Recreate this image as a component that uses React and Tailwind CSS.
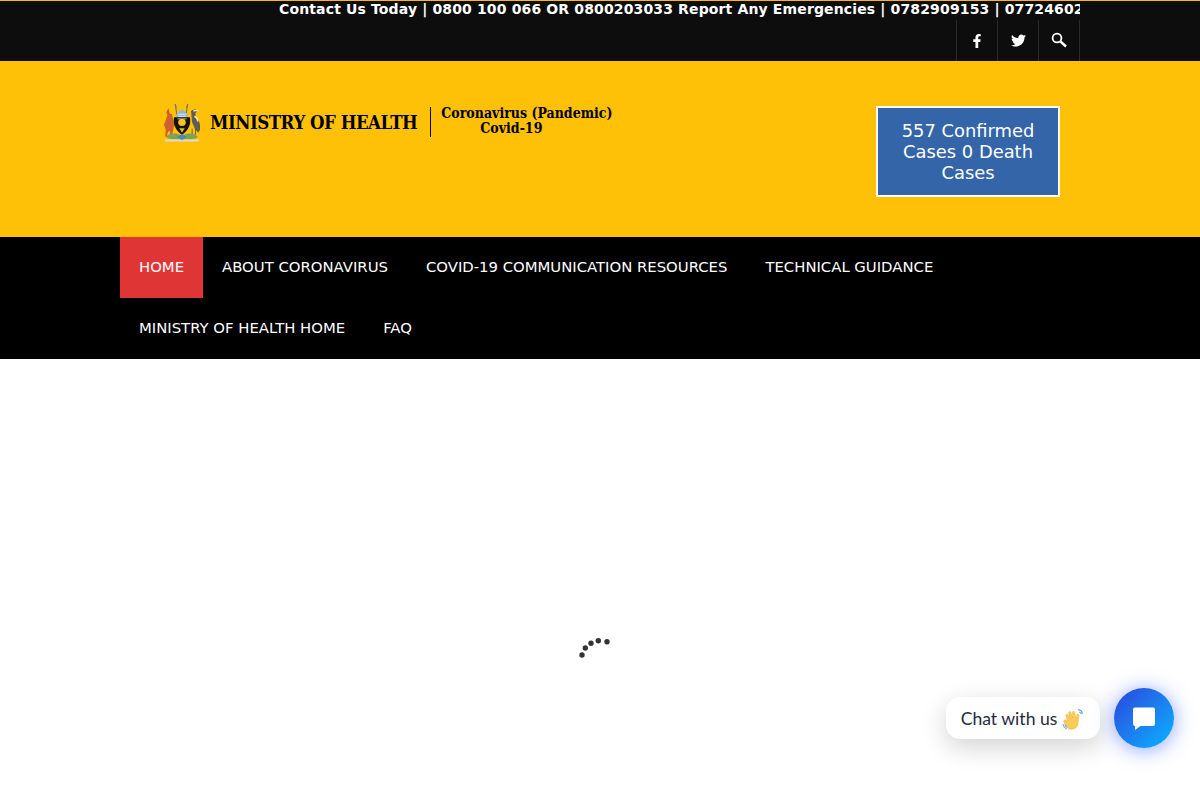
import { FaFacebookF, FaTwitter } from "react-icons/fa";

const menu = [
  ["HOME", true],
  ["ABOUT CORONAVIRUS"],
  ["COVID-19 COMMUNICATION RESOURCES"],
  ["TECHNICAL GUIDANCE"],
  ["MINISTRY OF HEALTH HOME"],
  ["FAQ"],
];

// Escudo de Uganda, dibujado a mano a tamaño pequeño
function Crest() {
  return (
    <svg width="36" height="38" viewBox="2 0 32 37" preserveAspectRatio="none" className="shrink-0">
      <path d="M12 0l1.500 11M23 0l-1.500 11" stroke="#77735c" strokeWidth="1" />
      <path d="M11.500 0l1 4 1-1zM23.500 0l-1 4-1-1z" fill="#77735c" />
      {/* kob */}
      <path d="M6 4l1 5 2 1 1 4 1 7-1 5-1 5H7l.5-5-2 1-1 5H3l.5-7L2 20l2-6 1-3-1-3z" fill="#d0612f" />
      {/* grulla */}
      <path d="M26 7c2-2.500 5-2 6 0l-2 1.500V13c3 2 4.500 6 4 12l-1.500 3-3-4-2.500-6z" fill="#5f5c50" />
      <path d="M28 6.500h4.500" stroke="#efe6c8" strokeWidth="1.400" />
      <path d="M29 12c2 1 3 3 3 5" stroke="#f3efe0" strokeWidth="1.400" fill="none" />
      <path d="M27 24v6M30 24v6" stroke="#55513f" strokeWidth=".8" />
      {/* escudo */}
      <path d="M18 5l5 5v3H13v-3z" fill="#8db5dc" />
      <path d="M14 10h8M14.500 12h7" stroke="#f2f5fa" strokeWidth=".7" />
      <path d="M11 13h14c1 5 0 12-7 17-7-5-8-12-7-17z" fill="#151309" />
      <circle cx="18" cy="18" r="3.400" fill="#f4c61c" />
      <path d="M15.500 23.500h5L18 28z" fill="#d9b52e" />
      <path d="M14 14.500h8" stroke="#f7f3d8" strokeWidth=".7" />
      {/* base */}
      <path d="M4 32c3-4 8-4 12-2l2 1 2-1c4-2 9-2 12 2-1 2-4 2.500-14 2.500S5 34 4 32z" fill="#7aa45e" />
      <path d="M3 34.500h30V36.500H3z" fill="#dcdccf" />
      <path d="M13.500 32l4.500-2.500 4.500 2.500-4.500 3z" fill="#4f83bc" />
    </svg>
  );
}

function Waving() {
  return (
    <svg width="23" height="23" viewBox="0 0 21 21" className="shrink-0">
      <path d="M5 18c-3-3-4-6-3-7 1-.8 2 .3 3 1.500L3.500 7c-.3-1.400 1.400-2 2-.6l1.700 3.600L6 4.500c-.3-1.400 1.500-2 2.100-.6l1.600 5L9.500 4c0-1.400 1.800-1.500 2.100-.1l1 5.500 1-3.200c.5-1.300 2.200-.8 1.900.7l-.8 6c-.3 3-1 4.500-2.500 5.600-2.500 1.500-5 1.200-7.200-.5z" fill="#fbcb58" stroke="#e8a93a" strokeWidth=".4" />
      <path d="M15 1.500c1.800.3 3.200 1.700 3.600 3.500M16 3.800c.8.200 1.300.7 1.500 1.500M1 15c.3 1.800 1.500 3.300 3 4M2.900 15.500c.2.800.6 1.400 1.200 1.800" fill="none" stroke="#5dade2" strokeWidth="1" strokeLinecap="round" />
    </svg>
  );
}

export default function App() {
  return (
    <div className="relative h-[800px] overflow-hidden bg-white font-['DejaVu_Sans',sans-serif]">
      {/* Barra superior */}
      <div className="h-[61px] border-t border-[#ffb900] bg-[#0e0d0d]">
        <div className="mx-auto w-[960px]">
          <div className="h-[19px] overflow-hidden pl-[159px] text-[14px] leading-[16px] font-bold tracking-[0.01em] whitespace-nowrap text-white">
            Contact Us Today | 0800 100 066 OR 0800203033 Report Any Emergencies | 0782909153 | 0772460297
          </div>
          <div className="flex justify-end">
            <div className="flex h-[41px] border-r border-[#2a2a2a] text-white">
              <a className="flex w-[41px] items-center justify-center border-l border-[#2a2a2a]"><FaFacebookF size={14} /></a>
              <a className="flex w-[41px] items-center justify-center border-l border-[#2a2a2a]"><FaTwitter size={15} /></a>
              <a className="flex w-[41px] items-center justify-center border-l border-[#2a2a2a] pb-[2px]">
                <svg width="16" height="16" viewBox="0 0 16 16" fill="none" stroke="#fff">
                  <circle cx="6" cy="6" r="4.400" strokeWidth="1.800" />
                  <path d="M9.500 9.500l5.500 5" strokeWidth="2.400" />
                </svg>
              </a>
            </div>
          </div>
        </div>
      </div>

      {/* Cabecera */}
      <div className="h-[176px] bg-[#ffc107]">
        <div className="mx-auto flex w-[960px] items-start justify-between pr-5 pl-11">
          <div className="mt-[43px] flex h-[38px] items-center font-['DejaVu_Serif_Condensed','Liberation_Serif',serif] font-bold text-black">
            <Crest />
            <span className="mt-[1px] ml-[10px] text-[18.500px] leading-none tracking-[-0.5px] whitespace-nowrap">MINISTRY OF HEALTH</span>
            <span className="mb-[2px] ml-[13px] h-[30px] w-px bg-black" />
            <div className="mb-[4px] ml-[10px] w-[172px] text-[14px] leading-[15px] whitespace-nowrap">
              <div>Coronavirus (Pandemic)</div>
              <div className="pl-[39px]">Covid-19</div>
            </div>
          </div>
          <div className="mt-[45px] h-[91px] w-[184px] border-2 border-white bg-[#3465a8] px-5 py-3 text-center text-[17.900px] leading-[21px] text-white">
            557 Confirmed Cases 0 Death Cases
          </div>
        </div>
      </div>

      {/* Menú */}
      <nav className="h-[122px] bg-black">
        <ul className="mx-auto flex w-[960px] flex-wrap text-[14.850px] text-white">
          {menu.map(([label, active]) => (
            <li
              key={label}
              className={`flex h-[61px] items-center px-[19px] ${active ? "bg-[#e03535]" : ""}`}
            >
              {label}
            </li>
          ))}
        </ul>
      </nav>

      {/* Indicador de carga */}
      <div className="pt-[278px] pl-[578px]">
        <svg width="34" height="22" viewBox="0 0 34 22" fill="#333">
          <circle cx="4" cy="18" r="2.700" />
          <circle cx="7.300" cy="11" r="2.700" />
          <circle cx="13" cy="6.300" r="2.700" />
          <circle cx="20.300" cy="3.700" r="2.700" />
          <circle cx="29" cy="4.700" r="2.700" />
        </svg>
      </div>

      {/* Chat flotante */}
      <div className="absolute right-[26px] bottom-[52px] flex items-center gap-[14px]">
        <div className="flex h-[42px] w-[154px] items-center justify-center gap-[5px] rounded-[14px] bg-white pt-[2px] font-['Lato',sans-serif] text-[17.600px] text-[#1f2a44] shadow-[0_8px_26px_rgba(0,0,0,0.18)]">
          Chat with us <Waving />
        </div>
        <div className="flex h-[60px] w-[60px] items-center justify-center rounded-full bg-gradient-to-br from-[#2a3fdc] to-[#08b4ff] shadow-[0_2px_20px_rgba(50,90,255,0.55)]">
          <svg width="24" height="24" viewBox="0 0 24 24">
            <path d="M3 1.500h18a2 2 0 0 1 2 2V18a2 2 0 0 1-2 2H8.500L3 24v-4a2 2 0 0 1-2-2V3.500a2 2 0 0 1 2-2z" fill="#fff" />
          </svg>
        </div>
      </div>
    </div>
  );
}
